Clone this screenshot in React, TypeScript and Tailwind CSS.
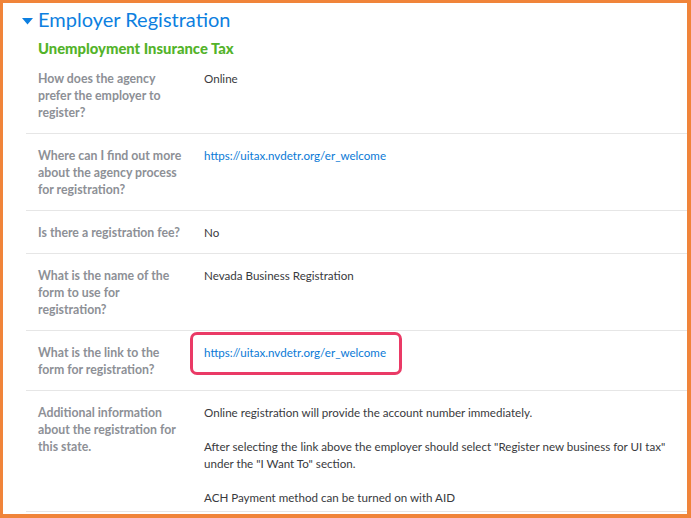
type Row = { label: string; value: "text" | "link" | "boxed" | "notes"; text?: string };

const DATA: Row[] = [
  { label: "How does the agency prefer the employer to register?", value: "text", text: "Online" },
  { label: "Where can I find out more about the agency process for registration?", value: "link", text: "https://uitax.nvdetr.org/er_welcome" },
  { label: "Is there a registration fee?", value: "text", text: "No" },
  { label: "What is the name of the form to use for registration?", value: "text", text: "Nevada Business Registration" },
  { label: "What is the link to the form for registration?", value: "boxed", text: "https://uitax.nvdetr.org/er_welcome" },
  { label: "Additional information about the registration for this state.", value: "notes" },
];

function Value({ row }: { row: Row }) {
  if (row.value === "text") return <span>{row.text}</span>;
  if (row.value === "link") return <a className="text-[#0a7ad6]">{row.text}</a>;
  if (row.value === "boxed")
    return (
      <span className="relative inline-block">
        <span className="absolute -left-[14px] -top-[12px] h-[43px] w-[212px] rounded-[7px] border-[3px] border-[#ea3a66]" />
        <a className="text-[#0a7ad6]">{row.text}</a>
      </span>
    );
  return (
    <div className="flex flex-col gap-[17px]">
      <p>Online registration will provide the account number immediately.</p>
      <p>
        After selecting the link above the employer should select "Register new business for UI tax" under the "I Want
        To" section.
      </p>
      <p>ACH Payment method can be turned on with AID</p>
    </div>
  );
}

export default function App() {
  return (
    <div
      className="h-[518px] w-[691px] overflow-hidden border-t-[3px] border-l-[3px] border-r-[4px] border-b-[4px] border-[#f0843a] bg-white"
      style={{ fontFamily: "Lato, 'Open Sans', sans-serif" }}
    >
      {/* Section title */}
      <div className="flex h-[31px] items-center pl-[19px]">
        <svg width="11" height="7" viewBox="0 0 11 7" className="mr-[5px] mt-[5px]">
          <path d="M0 0 H11 L5.5 6.5 Z" fill="#0d7fe0" />
        </svg>
        <h1 className="text-[20px] leading-none text-[#0d7fe0]">Employer Registration</h1>
      </div>

      <div className="pl-[23px]">
        <h2 className="pl-[12px] pt-[5px] text-[14.8px] font-black leading-[18px] text-[#53b32a]">
          Unemployment Insurance Tax
        </h2>

        {DATA.map((row, i) => (
          <div
            key={i}
            className={`flex border-b border-[#e6e6e6] pt-[13px] pl-[12px] leading-[17px] ${
              i === DATA.length - 1 ? "pb-[5px]" : "pb-[12px]"
            }`}
          >
            <div className="w-[145px] shrink-0 text-[12.3px] font-bold text-[#8d9096]">{row.label}</div>
            <div className="ml-[21px] flex-1 pr-[4px] text-[11.6px] text-[#393a3d]">
              <Value row={row} />
            </div>
          </div>
        ))}
      </div>
    </div>
  );
}
